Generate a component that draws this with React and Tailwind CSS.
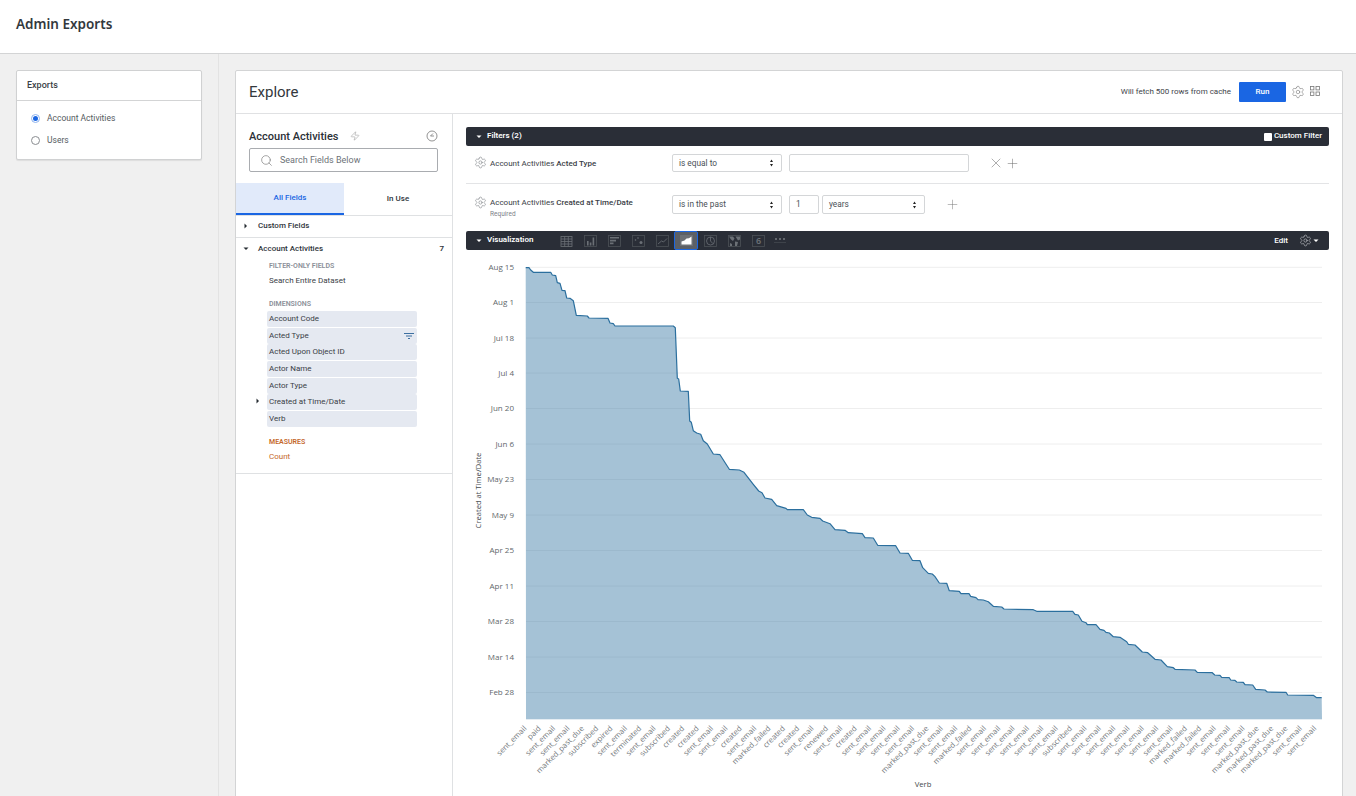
import React from "react";
import { Settings, Search, Zap, X, Plus } from "lucide-react";

const line = [[525.7,267.7],[529,267.7],[530.7,270],[533.3,272.3],[550.7,272.3],[552.3,275],[555.7,275.7],[557.3,282.7],[560,283.3],[562,290.3],[565,290.7],[566.7,298],[570,298.3],[573.3,300.7],[576.3,315.3],[587.3,316],[589,318],[608,318.3],[610,323],[613.3,323.7],[615,326],[673.3,326],[675.3,327.7],[677.3,378.3],[678.7,379],[680.3,391],[688.3,391.3],[689.7,421],[691.3,422.3],[693.3,430.7],[696.7,433],[700.7,434.3],[703.3,440.7],[707.3,444],[713.3,454],[720,454.7],[729.3,469.3],[739.3,470],[744,472.3],[753.3,484.3],[758.7,491],[762,492.7],[765,498],[771.7,499.3],[776.7,505.7],[786,508.3],[787.3,509.7],[803.3,509.7],[807.3,515],[811.7,517.3],[820,518.3],[822.7,521],[830,523.7],[835,529.7],[845,530.3],[848.3,532.7],[862.3,533.7],[865,537.7],[873.3,538],[877.7,545.3],[895.7,545.7],[900,553],[908.3,553.3],[912.3,560.3],[920,560.7],[922.7,567.7],[928.3,573.3],[932.3,574],[935,576.7],[939.3,583],[946.7,583.3],[949.3,590.7],[959.3,591.3],[961,593.7],[969,593.7],[970.7,596.3],[976,597.7],[978,599.7],[983.3,600],[988.3,601.7],[993.3,606.3],[1001.7,607],[1004,609],[1033.3,609.7],[1036.7,611.3],[1072.7,611.3],[1075,614.3],[1078.3,615],[1082,621.3],[1086,622.7],[1087.3,624.7],[1096,624.7],[1100,629.3],[1104,630.3],[1106,632.3],[1109.3,633],[1113.3,636.7],[1120,637.3],[1126.7,641.7],[1128.3,644.3],[1135,645],[1142.3,652],[1147.7,652.7],[1155,659.3],[1161,660],[1167.3,666.7],[1173.3,667.7],[1175,669.3],[1195,670],[1197.3,672.3],[1212.3,672.7],[1214.7,675],[1220,675.3],[1221.7,677.3],[1229.3,677.7],[1230.7,680],[1235,680.3],[1236.7,682],[1243.3,682.3],[1245,684.7],[1252.7,685],[1255.7,689.3],[1265,690],[1267.3,692],[1286,692.3],[1287.7,695],[1313.3,695.3],[1316.7,697.7],[1321.7,697.7]];
const pts = line.map((p) => p.join(",")).join(" ");
const grid = [["Aug 15",267.3],["Aug 1",302.5],["Jul 18",338],["Jul 4",373],["Jun 20",408.5],["Jun 6",444],["May 23",479.5],["May 9",515],["Apr 25",550.5],["Apr 11",586],["Mar 28",621.5],["Mar 14",657],["Feb 28",692.5]];
const S = "sent_email", M = "marked_past_due", F = "marked_failed", C = "created", B = "subscribed";
const verbs = [S,"paid",S,S,M,B,"expired",S,"terminated",S,B,C,C,S,S,C,S,F,C,C,S,"renewed",S,C,S,S,S,S,M,S,S,F,S,S,S,S,S,S,B,S,S,S,S,S,S,S,F,F,S,S,S,M,M,M,S,S];

function Chart() {
  return (
    <svg viewBox="466 250 863 546" className="block w-[863px] h-[546px] shrink-0" style={{ fontFamily: "'Open Sans',sans-serif" }}>
      {grid.map(([t, y]) => (
        <g key={t}>
          <line x1="526" x2="1322" y1={y} y2={y} stroke="#eeeeee" strokeWidth="1" />
          <text x="514" y={y + 2.8} textAnchor="end" fontSize="8" fill="#61676b">{t}</text>
        </g>
      ))}
      <polygon points={`526,719 ${pts} 1322,719`} fill="#3f7ea7" fillOpacity="0.47" />
      <polyline points={pts} fill="none" stroke="#2b6f9e" strokeWidth="1.2" strokeLinejoin="round" />
      <line x1="526" x2="1322" y1="719.5" y2="719.5" stroke="#e4ecf2" strokeWidth="1" />
      {verbs.map((v, i) => {
        const x = 527 + i * 14.36;
        return (
          <text key={i} transform={`translate(${x} 729) rotate(-45)`} textAnchor="end" fontSize="7.7" fill="#74797d">{v}</text>
        );
      })}
      <text transform="translate(481 490.5) rotate(-90)" textAnchor="middle" fontSize="7.6" fill="#444a4e">Created at Time/Date</text>
      <text x="923" y="786.5" textAnchor="middle" fontSize="7.7" fill="#444a4e">Verb</text>
    </svg>
  );
}

const Caret = ({ dir = "down", className = "", color = "#262d33" }) => (
  <svg width="6" height="6" viewBox="0 0 6 6" className={className}>
    <path d={dir === "down" ? "M0.5 1.5h5L3 4z" : "M1.5 0.5v5L4 3z"} fill={color} />
  </svg>
);

const Updown = () => (
  <svg width="5" height="8" viewBox="0 0 5 8"><path d="M2.5 0.5L4 3H1zM2.5 7.5L1 5h3z" fill="#222" /></svg>
);

const SelectBox = ({ w, h, children }) => (
  <div className={`flex items-center justify-between border border-[#d4d6d8] rounded-[2px] bg-white pl-[6px] pr-[7px] text-[8.3px] text-[#4a5056] ${w} ${h}`}>
    <span>{children}</span>
    <Updown />
  </div>
);

const Gear = ({ size = 13, color = "#6f7479" }) => <Settings size={size} strokeWidth={1} color={color} />;

const ic = "#6b7076";
const vizIcons = [
  <g key="a" stroke={ic} fill="none" strokeWidth=".8"><rect x="1" y="1.5" width="11" height="10" /><path d="M1 4h11M1 6.5h11M1 9h11M4.7 1.5v10M8.3 1.5v10" /></g>,
  <g key="b"><rect x=".5" y=".5" width="12" height="11" fill="none" stroke="#4c5158" strokeWidth=".8" /><path d="M3 6h1.6v4.5H3zM5.8 7.5h1.6v3H5.8zM8.6 2.5h1.6v8H8.6z" fill={ic} /></g>,
  <g key="c"><rect x=".5" y=".5" width="12" height="11" fill="none" stroke="#4c5158" strokeWidth=".8" /><path d="M2 2h9v1.6H2zM2 4.8h6v1.6H2zM2 7.6h3.5v1.6H2z" fill={ic} /></g>,
  <g key="d"><rect x=".5" y=".5" width="12" height="11" fill="none" stroke="#4c5158" strokeWidth=".8" /><circle cx="3.5" cy="5" r=".8" fill={ic} /><circle cx="6" cy="3" r=".8" fill={ic} /><circle cx="9" cy="7.5" r="1.5" fill={ic} /></g>,
  <g key="e" fill="none"><rect x=".5" y=".5" width="12" height="11" stroke="#4c5158" strokeWidth=".8" /><path d="M2 9l3.5-3 2 1L11 3.5" stroke={ic} strokeWidth=".8" /></g>,
  null,
  <g key="g" fill="none" stroke={ic} strokeWidth=".8"><rect x=".5" y=".5" width="12" height="11" stroke="#4c5158" /><circle cx="6.5" cy="6" r="4" /><path d="M6.5 2v4l2.4 2.6" /></g>,
  <g key="h"><rect x=".5" y=".5" width="12" height="11" fill="none" stroke="#4c5158" strokeWidth=".8" /><path d="M1 1.5h4l1.5 2L5 6 3 4.5zM7.5 1.5h4.5v3L10 5.5zM7 6.5l3 .5-1 4H7zM2 8l2 1v2H2z" fill={ic} /></g>,
  <g key="i"><rect x=".5" y=".5" width="12" height="11" fill="none" stroke="#4c5158" strokeWidth=".8" /><text x="6.5" y="9.4" textAnchor="middle" fontSize="9" fill={ic} fontFamily="'Noto Sans',sans-serif">6</text></g>,
];

function VizIcons() {
  return (
    <div className="flex items-center h-full ml-[11px]">
      {vizIcons.map((icon, i) =>
        i === 5 ? (
          <div key={i} className="w-[24px] h-full flex items-center justify-center bg-[#5c6066] border border-[#1a66e3] rounded-[2px]">
            <svg width="13" height="11" viewBox="0 0 13 11"><rect width="13" height="11" fill="#6c7076" /><path d="M1.5 9.5V6.5L4.5 5.5l2-2 2.5-.3L11.5 1.5v8z" fill="#fff" /></svg>
          </div>
        ) : (
          <div key={i} className="w-[24px] h-full flex items-center justify-center">
            <svg width="13" height="12" viewBox="0 0 13 12">{icon}</svg>
          </div>
        )
      )}
      <div className="w-[20px] h-full flex items-center justify-center">
        <div className="flex gap-[1.5px] pb-[2px] px-[1px] border-b border-[#3e434a]">
          <i className="block w-[2.5px] h-[2.5px] rounded-full bg-[#777b80]" />
          <i className="block w-[2.5px] h-[2.5px] rounded-full bg-[#777b80]" />
          <i className="block w-[2.5px] h-[2.5px] rounded-full bg-[#777b80]" />
        </div>
      </div>
    </div>
  );
}

const dims = ["Account Code", "Acted Type", "Acted Upon Object ID", "Actor Name", "Actor Type", "Created at Time/Date", "Verb"];

function FieldPicker() {
  return (
    <div className="w-[217px] shrink-0 border-r border-[#dfe1e3] text-[8px] text-[#2f353b]">
      <div className="pl-[13px] pr-[14px] pt-[14px]">
        <div className="flex items-center h-[15px]">
          <span className="text-[11px] font-medium text-[#2b3036] w-[99px] whitespace-nowrap pt-[1px] leading-[13px]">Account Activities</span>
          <Zap size={10} strokeWidth={1} color="#777" className="ml-[2px]" />
          <svg width="12" height="12" viewBox="0 0 12 12" className="ml-auto"><circle cx="6" cy="6" r="5" fill="none" stroke="#777" strokeWidth=".8" /><path d="M7 3.5L4.5 6H8" fill="none" stroke="#777" strokeWidth=".8" /></svg>
        </div>
        <div className="mt-[5px] h-[24px] border border-[#a9acb0] rounded-[2px] flex items-center pl-[10px] text-[9px] text-[#6d7278]">
          <Search size={13} strokeWidth={1.2} color="#777" />
          <span className="ml-[7px] pt-[2px]">Search Fields Below</span>
        </div>
      </div>
      <div className="mt-[11px] flex h-[33px] border-b border-[#dfe1e3]">
        <div className="w-[108px] bg-[#e1eafa] border-b-2 border-[#1a66e3] flex items-center justify-center font-medium text-[#1a66e3]">All Fields</div>
        <div className="w-[108px] flex items-center justify-center font-medium text-[#2f353b]">In Use</div>
      </div>
      <div className="h-[22px] flex items-center border-b border-[#dfe1e3] pl-[7px] pb-[2px]">
        <Caret dir="right" />
        <span className="ml-[9px] font-medium">Custom Fields</span>
      </div>
      <div className="border-b border-[#dfe1e3] pb-[8px]">
        <div className="h-[21px] flex items-center pl-[7px] pr-[8px]">
          <Caret />
          <span className="ml-[9px] font-medium">Account Activities</span>
          <span className="ml-auto font-semibold">7</span>
        </div>
        <div className="pl-[33px]">
          <div className="h-[13px] leading-[15px] text-[7px] font-semibold text-[#8b9098]">FILTER-ONLY FIELDS</div>
          <div className="h-[16px] leading-[16px] mt-[1px] text-[#3a4046]">Search Entire Dataset</div>
          <div className="h-[13px] leading-[15px] mt-[8px] text-[7px] font-semibold text-[#8b9098]">DIMENSIONS</div>
        </div>
        <div className="ml-[31px] w-[150px] mt-[1px] flex flex-col gap-[0.7px]">
          {dims.map((d, i) => (
            <div key={d} className="relative h-[16px] bg-[#e5e9f1] rounded-[2px] pl-[2px] leading-[15px] text-[#3a4046]">
              {d}
              {i === 5 && <Caret dir="right" className="absolute left-[-12px] top-[4px]" />}
              {i === 1 && (
                <svg width="10" height="7" viewBox="0 0 10 7" className="absolute right-[3px] top-[5px]"><path d="M0 .5h10M2 3h6M4 5.5h2" stroke="#3c6fa0" strokeWidth="1" /></svg>
              )}
            </div>
          ))}
        </div>
        <div className="pl-[33px] text-[#c4682b]">
          <div className="h-[13px] leading-[15px] mt-[8px] text-[7px] font-semibold">MEASURES</div>
          <div className="h-[16px] leading-[16px] mt-[1px]">Count</div>
        </div>
      </div>
    </div>
  );
}

function Results() {
  return (
    <div className="flex-1 min-w-0 pl-[13px] pr-[13px] pt-[13px] text-[8px]">
      <div className="h-[19px] bg-[#2a2e37] rounded-[2px] flex items-center pl-[10px] pr-[7px] text-white font-semibold">
        <Caret color="#fff" />
        <span className="ml-[5px] -mt-[1px]">Filters (2)</span>
        <span className="ml-auto flex items-center gap-[2px] font-medium">
          <i className="block w-[8px] h-[8px] bg-white rounded-[1px]" />
          <span className="-mt-[1px]">Custom Filter</span>
        </span>
      </div>
      <div className="h-[38px] border-b border-[#e3e4e6] flex items-center pb-[3px] text-[#3a4046]">
        <div className="w-[206px] pl-[8px] flex items-center">
          <span className="-mt-[2px]"><Gear /></span>
          <span className="ml-[3px] pt-[1px] whitespace-nowrap">Account Activities <b className="font-medium">Acted Type</b></span>
        </div>
        <SelectBox w="w-[110px]" h="h-[18px]">is equal to</SelectBox>
        <div className="ml-[7px] w-[180px] h-[18px] border border-[#d4d6d8] rounded-[2px]" />
        <X size={16} strokeWidth={0.8} color="#666" className="ml-[19px]" />
        <Plus size={15} strokeWidth={0.8} color="#666" className="ml-[1px]" />
      </div>
      <div className="h-[47px] flex items-start pt-[11px] text-[#3a4046]">
        <div className="w-[206px] pl-[8px] flex items-start">
          <span className="pt-[1px]"><Gear /></span>
          <div className="ml-[3px] pt-[1px]">
            <div className="whitespace-nowrap leading-[14px]">Account Activities <b className="font-medium">Created at Time/Date</b></div>
            <div className="text-[6.5px] leading-[8px] text-[#7d8288]">Required</div>
          </div>
        </div>
        <SelectBox w="w-[110px]" h="h-[19px]">is in the past</SelectBox>
        <div className="ml-[7px] w-[30px] h-[19px] border border-[#d4d6d8] rounded-[2px] flex items-center pl-[6px] text-[8.3px] text-[#4a5056]">1</div>
        <div className="ml-[3px]"><SelectBox w="w-[103px]" h="h-[19px]">years</SelectBox></div>
        <Plus size={15} strokeWidth={0.8} color="#777" className="ml-[20px] mt-[2px]" />
      </div>
      <div className="h-[19px] bg-[#2a2e37] rounded-[2px] flex items-center pl-[10px] pr-[10px] text-white font-semibold">
        <Caret color="#fff" />
        <span className="ml-[5px] w-[56px] -mt-[1px]">Visualization</span>
        <VizIcons />
        <span className="ml-auto font-medium">Edit</span>
        <span className="ml-[11px] flex items-center gap-[1px]">
          <Gear size={13} color="#d8dadd" />
          <Caret color="#fff" />
        </span>
      </div>
      <Chart />
    </div>
  );
}

export default function App() {
  return (
    <div className="h-[796px] w-[1356px] overflow-hidden flex flex-col bg-[#f0f0f0] font-['Roboto',sans-serif]">
      <header className="h-[54px] shrink-0 bg-white border-b border-[#d3d4d5] flex items-center pl-4 pb-[5px]">
        <h1 className="text-[13.5px] font-semibold text-[#33383d] font-['Noto_Sans',sans-serif]">Admin Exports</h1>
      </header>
      <div className="flex flex-1 min-h-0">
        <aside className="w-[219px] shrink-0 border-r border-[#e3e3e3] pl-4 pr-[16px] pt-4">
          <div className="bg-white border border-[#d0d1d2] rounded-[2px] h-[90px] shadow-[0_1px_1px_rgba(0,0,0,0.08)]">
            <div className="h-[30px] border-b border-[#d3d4d5] flex items-center pl-[10px] text-[9px] font-medium text-[#3a3f45]">Exports</div>
            <div className="pl-[14px] pt-[6px] text-[8.5px] text-[#555b61]">
              <div className="h-[22px] flex items-center">
                <span className="w-[9px] h-[9px] rounded-full border border-[#8fb4ee] flex items-center justify-center"><i className="block w-[5px] h-[5px] rounded-full bg-[#1a66e3]" /></span>
                <span className="ml-[7px]">Account Activities</span>
              </div>
              <div className="h-[22px] flex items-center">
                <span className="w-[9px] h-[9px] rounded-full border border-[#8a8d91]" />
                <span className="ml-[7px]">Users</span>
              </div>
            </div>
          </div>
        </aside>
        <main className="flex-1 min-w-0 pl-4 pr-[13px] pt-4">
          <div className="bg-white border border-[#d3d4d5] rounded-t-[2px] h-[800px] flex flex-col">
            <div className="h-[43px] shrink-0 border-b border-[#e0e1e3] flex items-center pl-[13px] pr-[22px]">
              <span className="text-[15px] text-[#33383d]">Explore</span>
              <span className="ml-auto text-[8px] text-[#3e444a]">Will fetch 500 rows from cache</span>
              <button className="ml-[8px] w-[47px] h-[20px] bg-[#1a66e3] rounded-[1px] text-white text-[8px] font-medium">Run</button>
              <span className="ml-[5px]"><Gear size={14} color="#777" /></span>
              <svg width="10" height="10" viewBox="0 0 10 10" className="ml-[5px] -mt-[2px]" fill="none" stroke="#777" strokeWidth=".8">
                <rect x=".5" y=".5" width="3.4" height="3.4" /><rect x="6" y=".5" width="3.4" height="3.4" /><rect x=".5" y="6" width="3.4" height="3.4" /><rect x="6" y="6" width="3.4" height="3.4" />
              </svg>
            </div>
            <div className="flex flex-1 min-h-0">
              <FieldPicker />
              <Results />
            </div>
          </div>
        </main>
      </div>
    </div>
  );
}
